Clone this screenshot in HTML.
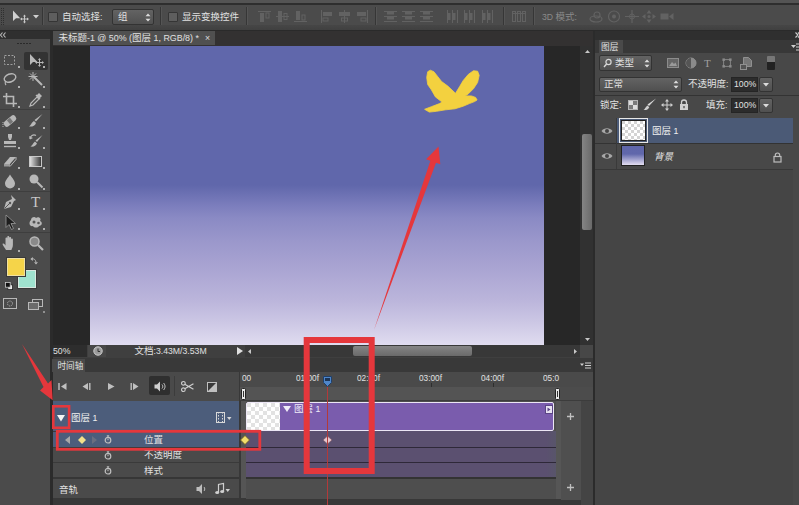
<!DOCTYPE html>
<html lang="zh-CN">
<head>
<meta charset="utf-8">
<title>Photoshop 时间轴</title>
<style>
html,body{margin:0;padding:0;}
body{width:799px;height:505px;overflow:hidden;position:relative;background:#454545;font-family:"Liberation Sans","Noto Sans CJK SC",sans-serif;font-size:11px;color:#dcdcdc;}
.a{position:absolute;}
.t{position:absolute;white-space:nowrap;line-height:12px;font-size:9.5px;color:#e0e0e0;}
.t b{font-weight:normal;font-size:8.700px;}
.sep{position:absolute;top:7px;width:1px;height:18px;background:#363636;border-right:1px solid #555;}
.dd{position:absolute;background:linear-gradient(#636363,#505050);border:1px solid #333;border-radius:2px;box-sizing:border-box;}
.fld{position:absolute;background:#2c2c2c;border:1px solid #252525;box-sizing:border-box;}
.row{position:absolute;left:53px;width:186px;}
.trk{position:absolute;left:246px;width:310px;background:linear-gradient(90deg,#5b5070 0,#5b5070 300px,#58556a 310px);}
svg{position:absolute;overflow:visible;}
</style>
</head>
<body>
<!-- top strip + options bar -->
<div class="a" style="left:0;top:0;width:799px;height:4px;background:#545454;"></div>
<div class="a" style="left:0;top:3px;width:799px;height:2px;background:#2e2e2e;"></div>
<div class="a" id="optbar" style="left:0;top:5px;width:799px;height:20px;background:#4b4b4b;"></div>
<div class="a" style="left:0;top:25px;width:799px;height:5px;background:linear-gradient(#464646,#404040);"></div>
<div class="a" style="left:0;top:30px;width:799px;height:1px;background:#2a2a2a;"></div>

<svg style="left:1px;top:8px" width="3" height="18"><path d="M0.500 0v18M2.500 0v18" stroke="#2f2f2f" stroke-dasharray="1 1"/></svg>
<svg style="left:12px;top:10px" width="18" height="13"><path d="M1 0.500v10.500l3-2.800h4.200z" fill="#d0d0d0"/><path d="M12.500 5.500v7M9 9h7" stroke="#c8c8c8" stroke-width="1"/><path d="M12.500 4.500l1.500 2h-3zM12.500 13.500l1.500-2h-3zM8 9l2-1.500v3zM17 9l-2-1.500v3z" fill="#c8c8c8"/></svg>
<svg style="left:33px;top:15px" width="6" height="4"><path d="M0 0h6l-3 3.500z" fill="#cfcfcf"/></svg>
<div class="a" style="left:48px;top:12px;width:10px;height:10px;box-sizing:border-box;background:#5e5e5e;border:1px solid #353535;border-radius:1px;"></div>
<div class="t" style="left:62px;top:11px;">自动选择<b>:</b></div>
<div class="dd" style="left:112px;top:9px;width:42px;height:16px;"></div>
<div class="t" style="left:118px;top:11px;">组</div>
<svg style="left:145px;top:13px" width="6" height="9"><path d="M0.500 3.200L3 0.500 5.500 3.200zM0.500 5.800L3 8.500 5.500 5.800z" fill="#dcdcdc"/></svg>
<div class="sep" style="left:42px;"></div>
<div class="sep" style="left:160px;"></div>
<div class="a" style="left:168px;top:12px;width:10px;height:10px;box-sizing:border-box;background:#5e5e5e;border:1px solid #353535;border-radius:1px;"></div>
<div class="t" style="left:182px;top:11px;">显示变换控件</div>
<div class="sep" style="left:246px;"></div>
<svg style="left:258px;top:10px" width="13" height="13"><path d="M0 1.500h13" stroke="#626262"/><rect x="2" y="3" width="4" height="9" fill="#626262"/><rect x="8" y="3" width="3" height="5" fill="none" stroke="#626262"/></svg>
<svg style="left:276px;top:10px" width="13" height="13"><path d="M0 6.500h13" stroke="#626262"/><rect x="2" y="1" width="4" height="11" fill="#626262"/><rect x="8" y="3.500" width="3" height="6" fill="none" stroke="#626262"/></svg>
<svg style="left:294px;top:10px" width="13" height="13"><path d="M0 11.500h13" stroke="#626262"/><rect x="2" y="1" width="4" height="9" fill="#626262"/><rect x="8" y="5" width="3" height="5" fill="none" stroke="#626262"/></svg>
<svg style="left:320px;top:10px" width="13" height="13"><path d="M1.500 0v13" stroke="#626262"/><rect x="3" y="2" width="9" height="4" fill="#626262"/><rect x="3" y="8" width="5" height="3" fill="none" stroke="#626262"/></svg>
<svg style="left:338px;top:10px" width="13" height="13"><path d="M6.500 0v13" stroke="#626262"/><rect x="1" y="2" width="11" height="4" fill="#626262"/><rect x="3.500" y="8" width="6" height="3" fill="none" stroke="#626262"/></svg>
<svg style="left:356px;top:10px" width="13" height="13"><path d="M11.500 0v13" stroke="#626262"/><rect x="1" y="2" width="9" height="4" fill="#626262"/><rect x="5" y="8" width="5" height="3" fill="none" stroke="#626262"/></svg>
<div class="sep" style="left:375px;"></div>
<svg style="left:384px;top:10px" width="13" height="13"><path d="M0 1.500h13M0 6.500h13M0 11.500h13" stroke="#626262"/><rect x="3" y="2" width="7" height="2.500" fill="#626262"/><rect x="3" y="7" width="7" height="2.500" fill="#626262"/></svg>
<svg style="left:402px;top:10px" width="13" height="13"><path d="M0 1.500h13M0 6.500h13M0 11.500h13" stroke="#626262"/><rect x="3" y="2" width="7" height="2.500" fill="#626262"/><rect x="3" y="7" width="7" height="2.500" fill="#626262"/></svg>
<svg style="left:420px;top:10px" width="13" height="13"><path d="M0 1.500h13M0 6.500h13M0 11.500h13" stroke="#626262"/><rect x="3" y="2" width="7" height="2.500" fill="#626262"/><rect x="3" y="7" width="7" height="2.500" fill="#626262"/></svg>
<svg style="left:446px;top:10px" width="13" height="13"><path d="M1.500 0v13M6.500 0v13M11.500 0v13" stroke="#626262"/><rect x="2" y="3" width="2.500" height="7" fill="#626262"/><rect x="7" y="3" width="2.500" height="7" fill="#626262"/></svg>
<svg style="left:463px;top:10px" width="13" height="13"><path d="M1.500 0v13M6.500 0v13M11.500 0v13" stroke="#626262"/><rect x="2" y="3" width="2.500" height="7" fill="#626262"/><rect x="7" y="3" width="2.500" height="7" fill="#626262"/></svg>
<svg style="left:481px;top:10px" width="13" height="13"><path d="M1.500 0v13M6.500 0v13M11.500 0v13" stroke="#626262"/><rect x="2" y="3" width="2.500" height="7" fill="#626262"/><rect x="7" y="3" width="2.500" height="7" fill="#626262"/></svg>
<div class="sep" style="left:503px;"></div>
<svg style="left:512px;top:10px" width="13" height="13"><rect x="0.500" y="1.500" width="3" height="10" fill="none" stroke="#626262"/><rect x="5.500" y="1.500" width="3" height="10" fill="none" stroke="#626262"/><rect x="10.500" y="1.500" width="3" height="10" fill="none" stroke="#626262"/><path d="M0 3.500h14" stroke="#626262"/></svg>
<div class="sep" style="left:533px;"></div>
<div class="t" style="left:542px;top:11px;color:#8a8a8a;"><b>3D </b>模式<b>:</b></div>
<svg style="left:589px;top:10px" width="14" height="13"><ellipse cx="7" cy="9" rx="6" ry="3" fill="none" stroke="#626262" stroke-width="1.200"/><circle cx="8" cy="5" r="3" fill="none" stroke="#626262" stroke-width="1.200"/></svg>
<svg style="left:607px;top:10px" width="14" height="13"><circle cx="7" cy="6.500" r="5.500" fill="none" stroke="#626262" stroke-width="1.200"/><circle cx="7" cy="6.500" r="2" fill="#626262"/></svg>
<svg style="left:625px;top:10px" width="14" height="13"><path d="M7 0v13M0 6.500h14" stroke="#626262" stroke-width="1.200"/><circle cx="7" cy="6.500" r="2.500" fill="none" stroke="#626262"/></svg>
<svg style="left:642px;top:10px" width="14" height="13"><path d="M7 0l2.500 3.500h-5zM7 13l2.500-3.500h-5zM0 6.500l3.500-2.500v5zM14 6.500l-3.500-2.500v5z" fill="#626262"/><circle cx="7" cy="6.500" r="1.500" fill="#626262"/></svg>
<svg style="left:660px;top:10px" width="14" height="13"><rect x="0.500" y="3.500" width="8" height="6" fill="#626262"/><path d="M9 6.500l4.500-3.500v7z" fill="#626262"/></svg>


<!-- left tool panel -->
<div class="a" id="tools" style="left:0;top:31px;width:50px;height:474px;background:#4b4b4b;"></div>
<div class="a" style="left:0;top:31px;width:50px;height:8px;background:#2f2f2f;"></div>
<div class="a" style="left:50px;top:31px;width:3px;height:474px;background:#2b2b2b;"></div>

<svg style="left:0px;top:32px" width="6" height="6"><path d="M2.500 0.500L0.500 3l2 2.500M5.500 0.500L3.500 3l2 2.500" fill="none" stroke="#b8b8b8" stroke-width="1.100"/></svg>
<div class="a" style="left:17px;top:43px;width:14px;height:1px;background:repeating-linear-gradient(90deg,#2a2a2a 0,#2a2a2a 2px,transparent 2px,transparent 3px);"></div>
<div class="a" style="left:24px;top:52px;width:24px;height:18px;background:#333;border-radius:2px;"></div>
<div class="a" style="left:0px;top:109px;width:50px;height:1px;background:#3e3e3e;"></div>
<div class="a" style="left:0px;top:191px;width:50px;height:1px;background:#3e3e3e;"></div>
<div class="a" style="left:0px;top:232px;width:50px;height:1px;background:#3e3e3e;"></div>
<svg style="left:2px;top:52px" width="16" height="16" viewBox="0 0 16 16"><rect x="2.500" y="3.500" width="10" height="9" fill="none" stroke="#a0a0a0" stroke-dasharray="2 1.500"/></svg>
<svg style="left:28px;top:52px" width="16" height="16" viewBox="0 0 16 16"><path d="M2 2v11l3-3h4.500z" fill="#b8b8b8"/><path d="M11.500 7v7M8 10.500h7" stroke="#b8b8b8"/><path d="M11.500 6l1.500 2h-3zM11.500 15l1.500-2h-3zM7 10.500l2-1.500v3zM16 10.500l-2-1.500v3z" fill="#b8b8b8"/></svg>
<svg style="left:2px;top:71px" width="16" height="16" viewBox="0 0 16 16"><ellipse cx="8" cy="7" rx="6" ry="4" transform="rotate(-20 8 7)" fill="none" stroke="#b8b8b8" stroke-width="1.400"/><path d="M4 10c-1 1-1 3 0 4" fill="none" stroke="#b8b8b8" stroke-width="1.200"/></svg>
<svg style="left:28px;top:71px" width="16" height="16" viewBox="0 0 16 16"><path d="M6 6l8 8" stroke="#b8b8b8" stroke-width="2"/><path d="M5 1v9M0.500 5.500h9M2 2.500l6 6M8 2.500l-6 6" stroke="#b8b8b8" stroke-width="1"/></svg>
<svg style="left:2px;top:92px" width="16" height="16" viewBox="0 0 16 16"><path d="M4.500 1v10.500H15M1 4.500h10.500V15" fill="none" stroke="#b8b8b8" stroke-width="1.600"/></svg>
<svg style="left:28px;top:92px" width="16" height="16" viewBox="0 0 16 16"><path d="M2 14l1-3 6-6 2 2-6 6z" fill="none" stroke="#b8b8b8" stroke-width="1.200"/><path d="M9 3l2-2 3 3-2 2 0.500 0.500-1 1-4-4 1-1z" fill="#b8b8b8"/></svg>
<svg style="left:2px;top:113px" width="16" height="16" viewBox="0 0 16 16"><rect x="1" y="5" width="14" height="6" rx="2.500" transform="rotate(-40 8 8)" fill="#b8b8b8"/><rect x="6" y="5.500" width="4" height="5" transform="rotate(-40 8 8)" fill="#777"/><path d="M1 9v5" stroke="#b8b8b8" stroke-dasharray="1 1"/></svg>
<svg style="left:28px;top:113px" width="16" height="16" viewBox="0 0 16 16"><path d="M14.500 1L8 8.500l-1.500-1.500z" fill="#b8b8b8"/><path d="M6 8l2 2c-1 3-4 4-7 3.500 2-1 2-3.500 5-5.500z" fill="#b8b8b8"/></svg>
<svg style="left:2px;top:133px" width="16" height="16" viewBox="0 0 16 16"><path d="M6 1h4v3l-1 3h-2l-1-3z" fill="#b8b8b8"/><rect x="2" y="8" width="12" height="3" fill="#b8b8b8"/><path d="M2 13.500h12" stroke="#b8b8b8" stroke-width="1.400"/></svg>
<svg style="left:28px;top:133px" width="16" height="16" viewBox="0 0 16 16"><path d="M14.500 2L9 9l-1.500-1.500z" fill="#b8b8b8"/><path d="M7 8.500l2 2c-1 2.500-3.500 3.500-6.500 3 2-1 2-3 4.500-5z" fill="#b8b8b8"/><path d="M2 6a4 4 0 0 1 6-3.500" fill="none" stroke="#b8b8b8" stroke-width="1.200"/><path d="M1 3l1 3.500 3-1.500z" fill="#b8b8b8"/></svg>
<svg style="left:2px;top:153px" width="16" height="16" viewBox="0 0 16 16"><path d="M2 11l6-7h6l-6 7z" fill="#b8b8b8"/><path d="M2 11v2.500h6V11z" fill="#9a9a9a"/><path d="M8 13.500l6-7V4" fill="none" stroke="#b8b8b8"/></svg>
<div class="a" style="left:29px;top:156px;width:13px;height:11px;box-sizing:border-box;border:1px solid #c8c8c8;background:linear-gradient(90deg,#e0e0e0,#3a3a3a);"></div>
<svg style="left:2px;top:173px" width="16" height="16" viewBox="0 0 16 16"><path d="M8 1.500c2.500 4 5 6 5 9a5 5 0 0 1-10 0c0-3 2.500-5 5-9z" fill="#b8b8b8"/></svg>
<svg style="left:28px;top:173px" width="16" height="16" viewBox="0 0 16 16"><circle cx="6" cy="6" r="4.500" fill="#b8b8b8"/><path d="M9 9l5.500 5.500" stroke="#b8b8b8" stroke-width="2"/></svg>
<svg style="left:2px;top:194px" width="16" height="16" viewBox="0 0 16 16"><path d="M9 1l5 5-2 1-3 6-7 2 2-7 6-3z" fill="#b8b8b8"/><path d="M2.500 14.500l5-5" stroke="#555" stroke-width="1"/><circle cx="8" cy="9" r="1.200" fill="#555"/></svg>
<div class="t" style="left:31px;top:194px;font-family:'Liberation Serif',serif;font-size:15px;line-height:16px;color:#c8c8c8;">T</div>
<svg style="left:2px;top:214px" width="16" height="16" viewBox="0 0 16 16"><path d="M4 1v12.500l3-3 2.500 5 2-1-2.500-5h4.500z" fill="#1e1e1e" stroke="#9a9a9a" stroke-width="0.800"/></svg>
<svg style="left:28px;top:214px" width="16" height="16" viewBox="0 0 16 16"><path d="M3 6c0-3 4-4 5-2 2-2 6 0 4 3 3 1 2 5-1 5-1 2-5 2-6 0-3 1-5-3-2-6z" fill="#b8b8b8"/><circle cx="6" cy="8" r="1.500" fill="#555"/><circle cx="10.500" cy="9" r="1.300" fill="#555"/></svg>
<svg style="left:2px;top:235px" width="16" height="16" viewBox="0 0 16 16"><path d="M4 15c-1-2-3-4-3.500-6 1-1 2 0 3 1.500V3.500c0-1.300 1.800-1.300 1.800 0V2c0-1.300 1.900-1.300 1.900 0v1c0-1.300 1.900-1.300 1.900 0v1.500c0-1.200 1.800-1.200 1.800 0V10c0 2-1 3.500-1.500 5z" fill="#b8b8b8"/></svg>
<svg style="left:28px;top:235px" width="16" height="16" viewBox="0 0 16 16"><circle cx="6.500" cy="6.500" r="4.500" fill="#8a8a8a" stroke="#b8b8b8" stroke-width="1.500"/><path d="M10 10l5 5" stroke="#b8b8b8" stroke-width="2.200"/></svg>
<div class="a" style="left:18px;top:66px;width:2px;height:2px;background:#b0b0b0;"></div>
<div class="a" style="left:43px;top:66px;width:2px;height:2px;background:#b0b0b0;"></div>
<div class="a" style="left:18px;top:86px;width:2px;height:2px;background:#b0b0b0;"></div>
<div class="a" style="left:43px;top:86px;width:2px;height:2px;background:#b0b0b0;"></div>
<div class="a" style="left:18px;top:106px;width:2px;height:2px;background:#b0b0b0;"></div>
<div class="a" style="left:43px;top:106px;width:2px;height:2px;background:#b0b0b0;"></div>
<div class="a" style="left:18px;top:127px;width:2px;height:2px;background:#b0b0b0;"></div>
<div class="a" style="left:43px;top:127px;width:2px;height:2px;background:#b0b0b0;"></div>
<div class="a" style="left:18px;top:147px;width:2px;height:2px;background:#b0b0b0;"></div>
<div class="a" style="left:43px;top:147px;width:2px;height:2px;background:#b0b0b0;"></div>
<div class="a" style="left:18px;top:167px;width:2px;height:2px;background:#b0b0b0;"></div>
<div class="a" style="left:43px;top:167px;width:2px;height:2px;background:#b0b0b0;"></div>
<div class="a" style="left:18px;top:188px;width:2px;height:2px;background:#b0b0b0;"></div>
<div class="a" style="left:43px;top:188px;width:2px;height:2px;background:#b0b0b0;"></div>
<div class="a" style="left:18px;top:208px;width:2px;height:2px;background:#b0b0b0;"></div>
<div class="a" style="left:43px;top:208px;width:2px;height:2px;background:#b0b0b0;"></div>
<div class="a" style="left:18px;top:228px;width:2px;height:2px;background:#b0b0b0;"></div>
<div class="a" style="left:43px;top:228px;width:2px;height:2px;background:#b0b0b0;"></div>
<div class="a" style="left:18px;top:250px;width:2px;height:2px;background:#b0b0b0;"></div>
<div class="a" style="left:18px;top:270px;width:18px;height:18px;box-sizing:border-box;background:#9fe3cf;border:1px solid #d8e8e0;outline:1px solid #3a3a3a;"></div>
<div class="a" style="left:7px;top:258px;width:18px;height:18px;box-sizing:border-box;background:#f5d449;border:1px solid #f0e0a0;outline:1px solid #3a3a3a;"></div>
<svg style="left:30px;top:257px" width="8" height="8" viewBox="0 0 10 10"><path d="M2 2.500c3-1 5 1 5.500 4" fill="none" stroke="#b8b8b8" stroke-width="1.200"/><path d="M0.500 2.500l3-2.500v5zM7.500 9.500l-2.500-3h5z" fill="#b8b8b8"/></svg>
<svg style="left:5px;top:282px" width="8" height="8" viewBox="0 0 10 10"><rect x="3.500" y="3.500" width="6" height="6" fill="#e8e8e8" stroke="#222"/><rect x="0.500" y="0.500" width="6" height="6" fill="#111" stroke="#ccc"/></svg>
<svg style="left:3px;top:298px" width="14" height="12"><rect x="0.500" y="0.500" width="13" height="10" fill="none" stroke="#b8b8b8"/><circle cx="7" cy="5.500" r="2.500" fill="none" stroke="#b8b8b8" stroke-dasharray="1 1"/></svg>
<svg style="left:28px;top:299px" width="15" height="11"><rect x="4.500" y="0.500" width="10" height="7" fill="#4b4b4b" stroke="#b8b8b8"/><rect x="0.500" y="3.500" width="10" height="7" fill="#6a6a6a" stroke="#b8b8b8"/></svg>
<div class="a" style="left:43px;top:311px;width:2px;height:2px;background:#909090;"></div>


<!-- document tab bar -->
<div class="a" style="left:53px;top:31px;width:540px;height:15px;background:#333131;"></div>
<div class="a" style="left:53px;top:31px;width:162px;height:14px;background:#505050;"></div>
<div class="t" style="left:58.500px;top:32px;">未标题<b style="font-size:8.900px">-1 @ 50% (</b>图层<b style="font-size:8.900px"> 1, RGB/8) *</b></div>
<div class="t" style="left:205px;top:32px;font-size:9px;"><b>×</b></div>

<!-- canvas surround -->
<div class="a" style="left:53px;top:46px;width:527px;height:299px;background:#272727;"></div>
<div class="a" id="canvas" style="left:90px;top:46px;width:453.500px;height:298.500px;background:linear-gradient(#6067ab 0%,#6067ab 46.500%,#7c7ebd 53.500%,#8a8ac4 57.500%,#9a97cb 65%,#a9a4d2 74%,#bbb5db 85%,#cbc6e4 92%,#e0dcf0 100%);"></div>

<svg style="left:0;top:0" width="799" height="505"><path d="M424.6 109.3 431.3 106.7 439.5 103.6 442.1 102.1 435.4 96.9 431.3 89.7 427.7 84.6 426.7 77.4 427.7 71.7 430.3 70.2 433.9 71.7 437.5 76.3 441.6 81.5 447.8 86.1 455.5 93.3 459.6 86.6 463.2 80.5 468.4 74.3 473.5 70.7 477.6 71.2 479.2 75.3 477.6 82.5 473.5 88.7 468.4 93.8 465.3 95.9 471.4 95.9 475.6 97.4 477.1 100.0 474.5 101.6 469.4 103.6 463.2 106.2 455.0 108.8 445.7 109.8 436.5 111.3 429.3 112.1z" fill="#f3d13f" stroke="#f3d13f" stroke-width="0.800" stroke-linejoin="round"/></svg>


<!-- vertical scrollbar -->
<div class="a" style="left:580px;top:46px;width:13px;height:299px;background:#313131;"></div>

<svg style="left:585px;top:50px" width="5" height="3"><path d="M0 3h5L2.500 0z" fill="#c8c8c8"/></svg>
<svg style="left:585px;top:338px" width="5" height="3"><path d="M0 0h5L2.500 3z" fill="#c8c8c8"/></svg>
<div class="a" style="left:582px;top:134px;width:10px;height:96px;border-radius:2px;background:linear-gradient(90deg,#858585,#6a6a6a);"></div>


<!-- status bar -->
<div class="a" style="left:53px;top:345px;width:540px;height:13px;background:#3f3f3f;"></div>
<div class="a" style="left:53px;top:345px;width:34px;height:12px;background:#2d2d2d;"></div>
<div class="a" style="left:88px;top:345px;width:18px;height:12px;background:#474747;"></div>
<div class="t" style="left:53px;top:345px;"><b>50%</b></div>
<div class="t" style="left:134.500px;top:345px;">文档<b>:3.43M/3.53M</b></div>

<svg style="left:93px;top:346px" width="10" height="10"><circle cx="5" cy="5" r="4.200" fill="#9a9a9a" stroke="#d0d0d0"/><path d="M5 2.500v3h2" fill="none" stroke="#333" stroke-width="1"/></svg>
<svg style="left:237px;top:347px" width="6" height="8"><path d="M0 0v8l6-4z" fill="#e0e0e0"/></svg>
<div class="a" style="left:245px;top:345px;width:335px;height:12px;background:#383838;"></div>
<svg style="left:248px;top:349px" width="3" height="5"><path d="M3 0v5L0 2.500z" fill="#c8c8c8"/></svg>
<svg style="left:574px;top:349px" width="3" height="5"><path d="M0 0v5l3-2.500z" fill="#c8c8c8"/></svg>
<div class="a" style="left:353px;top:346px;width:119px;height:10px;border-radius:2px;background:linear-gradient(#858585,#6a6a6a);"></div>
<div class="a" style="left:580px;top:345px;width:13px;height:13px;background:#474747;"></div>


<!-- timeline panel -->
<div class="a" style="left:53px;top:358px;width:540px;height:147px;background:#4a4a4a;"></div>

<div class="a" style="left:53px;top:358px;width:540px;height:14px;background:#393939;"></div>
<div class="a" style="left:52px;top:359px;width:33px;height:13px;background:#4a4a4a;"></div>
<div class="t" style="left:57.500px;top:360px;font-size:8.600px;">时间轴</div>
<svg style="left:580px;top:362px" width="11" height="8"><path d="M0 1.500l2 2.500 2-2.500z" fill="#cfcfcf"/><path d="M5 1h6M5 3.500h6M5 6h6" stroke="#cfcfcf" stroke-width="1"/></svg>
<!-- controls -->
<div class="a" style="left:53px;top:372px;width:186px;height:28px;background:#4a4a4a;"></div>
<svg style="left:58px;top:383px" width="9" height="7"><path d="M1 0v7" stroke="#c0c0c0" stroke-width="1.400"/><path d="M8.500 0v7l-5.500-3.500z" fill="#c0c0c0"/></svg>
<svg style="left:82px;top:383px" width="9" height="7"><path d="M7.800 0v7" stroke="#c0c0c0" stroke-width="1.400"/><path d="M6 0v7L0.500 3.500z" fill="#c0c0c0"/></svg>
<svg style="left:108px;top:383px" width="7" height="7"><path d="M0 0v7l6.500-3.500z" fill="#c0c0c0"/></svg>
<svg style="left:130px;top:383px" width="9" height="7"><path d="M1.200 0v7" stroke="#c0c0c0" stroke-width="1.400"/><path d="M3 0v7l5.500-3.500z" fill="#c0c0c0"/></svg>
<div class="a" style="left:149px;top:376px;width:21px;height:19px;background:#2f2f2f;border-radius:2px;"></div>
<svg style="left:154px;top:381px" width="12" height="11"><path d="M0.500 3.500h2.500l3-3v10l-3-3H0.500z" fill="#cfcfcf"/><path d="M8 3.500c1 1 1 3 0 4M9.500 2c2 2 2 5 0 7" fill="none" stroke="#cfcfcf" stroke-width="1"/></svg>
<div class="a" style="left:174px;top:376px;width:1px;height:20px;background:#3c3c3c;"></div>
<svg style="left:181px;top:381px" width="13" height="11" viewBox="0 0 14 12"><circle cx="2.500" cy="2.500" r="2" fill="none" stroke="#cfcfcf" stroke-width="1.200"/><circle cx="2.500" cy="9.500" r="2" fill="none" stroke="#cfcfcf" stroke-width="1.200"/><path d="M4 3.500L13.500 9M4 8.500L13.500 3" stroke="#cfcfcf" stroke-width="1.300"/></svg>
<svg style="left:207px;top:382px" width="10" height="10"><rect x="0.500" y="0.500" width="9" height="9" fill="#3a3a3a" stroke="#c0c0c0"/><path d="M9 1v8H1z" fill="#c0c0c0"/></svg>
<!-- divider -->
<div class="a" style="left:239px;top:372px;width:2px;height:133px;background:#383838;"></div>
<div class="a" style="left:241px;top:372px;width:5px;height:127px;background:#555;"></div>
<!-- layer row -->
<div class="row" style="top:401px;height:30px;background:#4c5d7b;"></div>
<svg style="left:57px;top:415px" width="8" height="6.500"><path d="M0 0h8l-4 6.500z" fill="#f4f4f4"/></svg>
<div class="t" style="left:71px;top:412px;color:#f0f0f0;">图层<b> 1</b></div>
<svg style="left:216px;top:412px" width="16" height="11"><rect x="0.500" y="0.500" width="8" height="10" fill="none" stroke="#d8d8d8"/><path d="M2.500 0v11M6.500 0v11" stroke="#d8d8d8" stroke-dasharray="1.500 1.500"/><path d="M11 5h4.500l-2.250 3z" fill="#d8d8d8"/></svg>
<!-- position row -->
<div class="row" style="top:431px;height:1px;background:#3a3a3a;"></div>
<div class="row" style="top:432px;height:15px;background:#4c5d7b;"></div>
<svg style="left:65px;top:436px" width="5" height="8"><path d="M5 0v8L0 4z" fill="#a8a8a8"/></svg>
<svg style="left:78px;top:436px" width="8" height="8"><path d="M4 0l4 4-4 4-4-4z" fill="#f3e08a"/></svg>
<svg style="left:92px;top:436px" width="5" height="8"><path d="M0 0v8l5-4z" fill="#6a6f80"/></svg>
<svg style="left:103px;top:434px" width="10" height="11"><circle cx="5" cy="6.200" r="2.800" fill="none" stroke="#c0c0c0" stroke-width="1.200"/><path d="M3.800 1.800h2.400M5 2v1.500M5 6.200V4.500" stroke="#c0c0c0" stroke-width="1"/></svg>

<div class="t" style="left:144px;top:434px;">位置</div>
<div class="row" style="top:447px;height:1px;background:#3a3a3a;"></div>
<svg style="left:103px;top:450px" width="10" height="11"><circle cx="5" cy="6.200" r="2.800" fill="none" stroke="#c0c0c0" stroke-width="1.200"/><path d="M3.800 1.800h2.400M5 2v1.500M5 6.200V4.500" stroke="#c0c0c0" stroke-width="1"/></svg>

<div class="t" style="left:144px;top:449px;">不透明度</div>
<div class="row" style="top:462px;height:1px;background:#3a3a3a;"></div>
<svg style="left:103px;top:465px" width="10" height="11"><circle cx="5" cy="6.200" r="2.800" fill="none" stroke="#c0c0c0" stroke-width="1.200"/><path d="M3.800 1.800h2.400M5 2v1.500M5 6.200V4.500" stroke="#c0c0c0" stroke-width="1"/></svg>

<div class="t" style="left:144px;top:465px;">样式</div>
<div class="row" style="top:477px;height:2px;background:#363636;"></div>
<div class="t" style="left:59px;top:484px;">音轨</div>
<svg style="left:196px;top:484px" width="11" height="10"><path d="M0.500 3h2.500l3-3v10l-3-3H0.500z" fill="#bdbdbd"/><path d="M8 3c1 1 1 3 0 4" fill="none" stroke="#bdbdbd" stroke-width="1"/></svg>
<svg style="left:215px;top:483px" width="15" height="12"><path d="M3.500 9V1.500l5-1V8" fill="none" stroke="#d0d0d0" stroke-width="1.200"/><ellipse cx="2.200" cy="9.500" rx="2" ry="1.600" fill="#d0d0d0"/><ellipse cx="7.200" cy="8.500" rx="2" ry="1.600" fill="#d0d0d0"/><path d="M10.500 6h4.500l-2.250 3z" fill="#d0d0d0"/></svg>
<div class="a" style="left:53px;top:498px;width:540px;height:7px;background:#383838;"></div>
<!-- ruler -->
<div class="a" style="left:240px;top:372px;width:353px;height:15px;background:#4a4a4a;"></div>
<div class="a" style="left:240px;top:387px;width:320px;height:13px;background:#545454;"></div>
<div class="a" style="left:560px;top:387px;width:33px;height:13px;background:#4c4c4c;"></div>
<div class="a" style="left:240px;top:400px;width:353px;height:1px;background:#3c3c3c;"></div>
<div class="t" style="left:242px;top:372px;font-size:9.500px;transform:scaleX(0.87);transform-origin:0 0;">00</div>
<div class="t" style="left:296px;top:372px;font-size:9.500px;transform:scaleX(0.87);transform-origin:0 0;">01:00f</div>
<div class="t" style="left:357px;top:372px;font-size:9.500px;transform:scaleX(0.87);transform-origin:0 0;">02:00f</div>
<div class="t" style="left:419px;top:372px;font-size:9.500px;transform:scaleX(0.87);transform-origin:0 0;">03:00f</div>
<div class="t" style="left:481px;top:372px;font-size:9.500px;transform:scaleX(0.87);transform-origin:0 0;">04:00f</div>
<div class="t" style="left:543px;top:372px;font-size:9.500px;transform:scaleX(0.87);transform-origin:0 0;">05:0</div>
<svg style="left:241px;top:388px" width="5" height="12"><rect x="0.500" y="0.500" width="4" height="11" rx="1" fill="#e8e8e8" stroke="#222"/><path d="M2.500 3v6" stroke="#333"/></svg>
<svg style="left:555px;top:388px" width="5" height="12"><rect x="0.500" y="0.500" width="4" height="11" rx="1" fill="#e8e8e8" stroke="#222"/><path d="M2.500 3v6" stroke="#333"/></svg>
<!-- tracks -->
<div class="a" style="left:246px;top:401px;width:310px;height:30px;background:#4e4e4e;"></div>
<div class="trk" style="top:431px;height:16px;"></div>
<div class="trk" style="top:448px;height:14px;"></div>
<div class="trk" style="top:463px;height:14px;"></div>
<div class="a" style="left:246px;top:447px;width:310px;height:1px;background:#2e2838;"></div>
<div class="a" style="left:246px;top:462px;width:310px;height:1px;background:#2e2838;"></div>
<div class="a" style="left:246px;top:477px;width:310px;height:2px;background:#333;"></div>
<div class="a" style="left:246px;top:479px;width:310px;height:20px;background:#4e4e4e;"></div>
<!-- clip -->
<div class="a" style="left:246px;top:402px;width:308px;height:29px;box-sizing:border-box;background:#7a5cad;border:1px solid #ece6f5;border-radius:2px;"></div>
<svg style="left:247px;top:403px" width="33" height="27"><defs><pattern id="chk2" width="8" height="8" patternUnits="userSpaceOnUse"><rect width="8" height="8" fill="#fff"/><rect width="4" height="4" fill="#e2e2e2"/><rect x="4" y="4" width="4" height="4" fill="#e2e2e2"/></pattern></defs><rect width="33" height="27" fill="url(#chk2)"/></svg>
<svg style="left:283px;top:406px" width="8" height="6"><path d="M0 0h8l-4 6z" fill="#f0ecf8"/></svg>
<div class="t" style="left:294px;top:403px;color:#f0ecf8;">图层<b> 1</b></div>
<svg style="left:545px;top:405px" width="8" height="9"><rect x="0.500" y="0.500" width="7" height="8" fill="#e8e2f2" stroke="#5a4585"/><path d="M2.500 2.500v4l3-2z" fill="#5a4585"/></svg>
<!-- plus column -->
<div class="a" style="left:556px;top:401px;width:5px;height:98px;background:#565656;"></div>
<div class="a" style="left:561px;top:401px;width:20px;height:99px;background:#4f4f4f;"></div>
<div class="a" style="left:581px;top:401px;width:12px;height:104px;background:#444;"></div>
<svg style="left:567px;top:413px" width="7" height="7"><path d="M3.500 0v7M0 3.500h7" stroke="#c0c0c0" stroke-width="1.300"/></svg>
<svg style="left:567px;top:484px" width="7" height="7"><path d="M3.500 0v7M0 3.500h7" stroke="#c0c0c0" stroke-width="1.300"/></svg>
<!-- keyframes -->
<svg style="left:240px;top:435px" width="10" height="10"><path d="M5 0.500l4.500 4.500-4.500 4.500-4.500-4.500z" fill="#f1dd6a" stroke="#6b5a1e" stroke-width="0.800"/></svg>
<svg style="left:322px;top:435px" width="11" height="10"><path d="M5.500 1l4.500 4-4.500 4-4.500-4z" fill="#e8c8d0" stroke="#7a5a6a" stroke-width="0.800"/></svg>
<!-- playhead -->
<div class="a" style="left:327px;top:386px;width:1px;height:119px;background:#b23a3a;"></div>
<svg style="left:323px;top:376px" width="9" height="11"><path d="M0.500 0.500h8v6l-4 4-4-4z" fill="#4f86c9" stroke="#20406a"/><rect x="2" y="2" width="5" height="3" fill="#1d3556"/></svg>
<div class="a" style="left:431px;top:383px;width:1px;height:4px;background:#2e2e2e;"></div>
<div class="a" style="left:493px;top:383px;width:1px;height:4px;background:#2e2e2e;"></div>


<!-- right panel -->
<div class="a" style="left:593px;top:31px;width:2px;height:474px;background:#2b2b2b;"></div>
<div class="a" style="left:595px;top:31px;width:204px;height:474px;background:#454545;"></div>

<div class="a" style="left:595px;top:31px;width:204px;height:9px;background:#2f2f2f;"></div>
<div class="a" style="left:595px;top:40px;width:204px;height:13px;background:#383838;"></div>
<div class="a" style="left:599px;top:40px;width:24px;height:13px;background:#4a4a4a;"></div>
<div class="t" style="left:601px;top:41px;font-size:8.700px;">图层</div>
<svg style="left:795px;top:32px" width="5" height="6"><path d="M0.500 0.500L3 3 0.500 5.500M3 0.500L5.500 3 3 5.500" fill="none" stroke="#d0d0d0" stroke-width="1.100"/></svg>
<svg style="left:790px;top:43px" width="12" height="10"><path d="M1 2l2.5 3 2.5-3z" fill="#cfcfcf"/><path d="M6 1h6M6 4h6M6 7h6" stroke="#cfcfcf" stroke-width="1"/></svg>
<div class="a" style="left:595px;top:53px;width:204px;height:42px;background:#484848;"></div>
<!-- filter row -->
<div class="dd" style="left:599px;top:55px;width:53px;height:16px;"></div>
<svg style="left:603px;top:58px" width="10" height="10"><circle cx="5.5" cy="4" r="2.6" fill="none" stroke="#d8d8d8" stroke-width="1.2"/><path d="M3.6 6L1 9" stroke="#d8d8d8" stroke-width="1.4"/></svg>
<div class="t" style="left:615px;top:57px;">类型</div>
<svg style="left:644px;top:59px" width="6" height="9"><path d="M0.5 3.2L3 0.5 5.5 3.2zM0.5 5.8L3 8.5 5.5 5.8z" fill="#dcdcdc"/></svg>
<svg style="left:667px;top:57px" width="12" height="12"><rect x="0.5" y="1.5" width="11" height="9" fill="#666" stroke="#8c8c8c"/><path d="M2 9l3-4 2 2 1.5-1.5L10 9z" fill="#9a9a9a"/></svg>
<svg style="left:685px;top:57px" width="12" height="12"><circle cx="6" cy="6" r="5" fill="#8a8a8a" stroke="#909090"/><path d="M6 1a5 5 0 0 0 0 10z" fill="#555"/></svg>
<div class="t" style="left:704px;top:57px;font-family:'Liberation Serif',serif;font-size:11px;color:#a0a0a0;">T</div>
<svg style="left:722px;top:58px" width="10" height="10" viewBox="0 0 12 12"><rect x="2" y="2" width="8" height="8" fill="none" stroke="#909090"/><rect x="0.5" y="0.5" width="3" height="3" fill="#8a8a8a"/><rect x="8.5" y="0.5" width="3" height="3" fill="#8a8a8a"/><rect x="0.5" y="8.5" width="3" height="3" fill="#8a8a8a"/><rect x="8.5" y="8.5" width="3" height="3" fill="#8a8a8a"/></svg>
<svg style="left:740px;top:57px" width="13" height="13"><path d="M3.5 0.5h5l3 3v6h-8z" fill="#777" stroke="#909090"/><rect x="0.5" y="7.500" width="6" height="5" fill="#555" stroke="#909090"/></svg>
<div class="a" style="left:767px;top:56px;width:8px;height:14px;background:linear-gradient(#777 0%,#777 40%,#222 41%,#222 100%);border-radius:1px;"></div>
<!-- blend row -->
<div class="dd" style="left:599px;top:77px;width:83px;height:15px;"></div>
<div class="t" style="left:604px;top:78px;">正常</div>
<svg style="left:673px;top:80px" width="6" height="9"><path d="M0.5 3.2L3 0.5 5.5 3.2zM0.5 5.8L3 8.500 5.5 5.8z" fill="#dcdcdc"/></svg>
<div class="t" style="left:688px;top:78px;">不透明度<b>:</b></div>
<div class="fld" style="left:731px;top:77px;width:27px;height:15px;"></div>
<div class="t" style="left:734px;top:78px;"><b>100%</b></div>
<div class="dd" style="left:759px;top:77px;width:14px;height:15px;"></div>
<svg style="left:763px;top:83px" width="6" height="4"><path d="M0 0h6l-3 3.500z" fill="#dcdcdc"/></svg>
<div class="a" style="left:595px;top:95px;width:204px;height:1px;background:#333;"></div>
<div class="a" style="left:595px;top:96px;width:204px;height:22px;background:#484848;"></div>
<!-- lock row -->
<div class="t" style="left:600px;top:99px;">锁定<b>:</b></div>
<svg style="left:628px;top:100px" width="10" height="10"><rect x="0.5" y="0.5" width="9" height="9" fill="#7a7a7a" stroke="#b5b5b5"/><rect x="1" y="1" width="4" height="4" fill="#ddd"/><rect x="5" y="5" width="4" height="4" fill="#ddd"/></svg>
<svg style="left:643px;top:98px" width="14" height="13"><path d="M13 0.500L6 8l-1.500-1.500z" fill="#d8d8d8"/><path d="M4.500 7.500l1.800 1.800c-1 2.500-3.500 3-5.800 2.700 1.500-0.800 1.800-2.800 4-4.500z" fill="#cfcfcf"/></svg>
<svg style="left:661px;top:99px" width="12" height="12"><path d="M6 0l2 2.500H4zM6 12l2-2.500H4zM0 6l2.500-2v4zM12 6l-2.500-2v4z" fill="#cfcfcf"/><path d="M6 2v8M2 6h8" stroke="#cfcfcf" stroke-width="1"/></svg>
<svg style="left:679px;top:99px" width="10" height="12"><path d="M2.500 5V3.500a2.500 2.500 0 0 1 5 0V5" fill="none" stroke="#cfcfcf" stroke-width="1.300"/><rect x="1" y="5" width="8" height="6" fill="#cfcfcf"/><rect x="4.300" y="7" width="1.400" height="2.200" fill="#555"/></svg>
<div class="t" style="left:706px;top:99px;">填充<b>:</b></div>
<div class="fld" style="left:731px;top:98px;width:27px;height:15px;"></div>
<div class="t" style="left:734px;top:99px;"><b>100%</b></div>
<div class="dd" style="left:759px;top:98px;width:14px;height:15px;"></div>
<svg style="left:763px;top:104px" width="6" height="4"><path d="M0 0h6l-3 3.500z" fill="#dcdcdc"/></svg>
<!-- layers -->
<div class="a" style="left:595px;top:118px;width:198px;height:25px;background:#4b5a76;"></div>
<div class="a" style="left:595px;top:118px;width:21px;height:25px;background:#484848;"></div>
<div class="a" style="left:595px;top:143px;width:198px;height:1px;background:#333;"></div>
<div class="a" style="left:595px;top:144px;width:198px;height:25px;background:#484848;"></div>
<div class="a" style="left:595px;top:169px;width:198px;height:1px;background:#383838;"></div>
<div class="a" style="left:616px;top:118px;width:1px;height:51px;background:#3a3a3a;"></div>
<div class="a" style="left:793px;top:117px;width:6px;height:388px;background:#484848;"></div>
<svg style="left:601px;top:127px" width="12" height="8"><path d="M0.500 4C3 0.300 9 0.300 11.500 4 9 7.700 3 7.700 0.500 4z" fill="#a8a8a8"/><circle cx="6" cy="4" r="2" fill="#444"/></svg>
<svg style="left:601px;top:152px" width="12" height="8"><path d="M0.500 4C3 0.300 9 0.300 11.500 4 9 7.700 3 7.700 0.500 4z" fill="#a8a8a8"/><circle cx="6" cy="4" r="2" fill="#444"/></svg>
<svg style="left:619px;top:118px" width="29" height="25"><defs><pattern id="chk" width="6" height="6" patternUnits="userSpaceOnUse"><rect width="6" height="6" fill="#fff"/><rect width="3" height="3" fill="#d4d4d4"/><rect x="3" y="3" width="3" height="3" fill="#d4d4d4"/></pattern></defs><rect x="0.500" y="0.500" width="28" height="24" fill="none" stroke="#e8e8e8"/><rect x="2.500" y="2.500" width="24" height="20" fill="url(#chk)" stroke="#222"/></svg>
<div class="a" style="left:621px;top:145px;width:24px;height:21px;border:1px solid #222;box-sizing:border-box;background:linear-gradient(#5f66aa 0%,#6067ab 42%,#e4def2 100%);"></div>
<div class="t" style="left:652px;top:125px;color:#f0f0f0;">图层<b> 1</b></div>
<div class="t" style="left:654px;top:151px;font-style:italic;">背景</div>
<svg style="left:773px;top:152px" width="9" height="11"><path d="M2.300 4.500V3.200a2.200 2.200 0 0 1 4.400 0V4.500" fill="none" stroke="#bdbdbd" stroke-width="1.200"/><rect x="1" y="4.500" width="7" height="5.500" fill="none" stroke="#bdbdbd" stroke-width="1.200"/></svg>



<svg style="left:0;top:0" width="799" height="505">
<path d="M374 330L430.400 160.700 426.100 159.200 438.500 146.600 440.300 164.200 436 162.700z" fill="#e5373c"/>
<path d="M22 344L43.500 387 40 390.500 52.700 400.300 51.500 380 48 383.500z" fill="#e5373c"/>
<rect x="53.300" y="406.300" width="15.800" height="21.500" fill="none" stroke="#e5373c" stroke-width="2.600"/>
<rect x="57.300" y="431.300" width="202.500" height="18" fill="none" stroke="#e5373c" stroke-width="2.800"/>
<rect x="306.700" y="340" width="65" height="131" fill="none" stroke="#e5373c" stroke-width="6"/>
</svg>

</body>
</html>
